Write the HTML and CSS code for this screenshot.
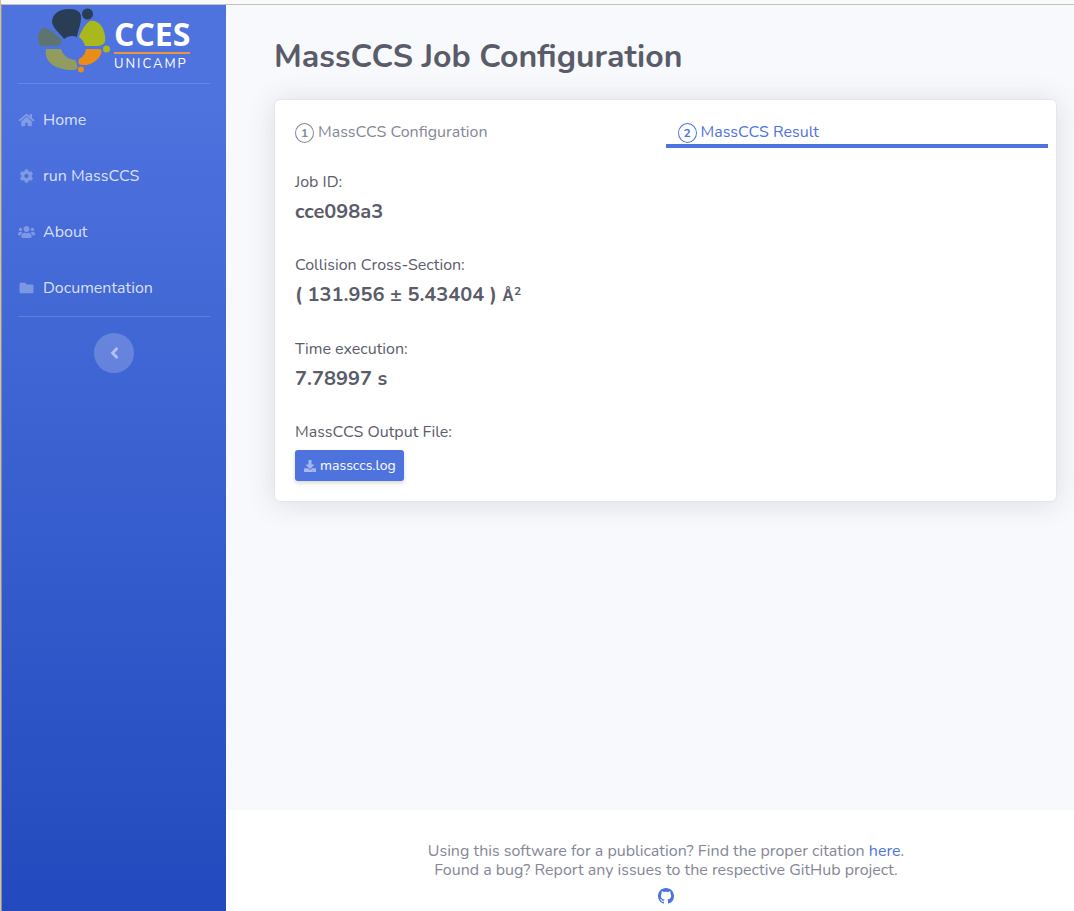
FILE: index.html
```html
<!DOCTYPE html>
<html lang="en">
<head>
<meta charset="utf-8">
<meta name="viewport" content="width=device-width, initial-scale=1">
<title>MassCCS Job Configuration</title>
<link rel="stylesheet" href="styles.css">
</head>
<body>
<div class="wrapper">
  <aside class="sidebar">
    <a class="brand" href="#" aria-label="CCES Unicamp">
      <svg class="brand-mark" viewBox="0 0 74 66" aria-hidden="true">
        <path fill="#293d54" d="M27 31C23 25 15 20 15 13C16 5 23 1 32 1C40 1 44 4 44 9C44 17 41 22 40 29C35 27 31 28 27 31Z"/>
        <circle fill="#293d54" cx="50.500" cy="6" r="5.500"/>
        <path fill="#a9b81d" d="M42 29C44 24 48 16 53 13C60 11 67 18 68 28C69 35 67 37 61 38H48C47 34 45 31 42 29Z"/>
        <circle fill="#a9b81d" cx="69.500" cy="41" r="3.500"/>
        <path fill="#5d7470" d="M25 32C19 27 12 19 6 20C1 23 0 31 2 35C3 39 7 39 11 38L24 37C23 35 24 33 25 32Z"/>
        <path fill="#939c5f" d="M9 41L24 41C26 47 30 51 38 52C40 55 41 59 40 61C36 63 28 62 22 60C13 57 7 50 9 41Z"/>
        <path fill="#e98c18" d="M49 41H61C65 41 65 43 64 46C61 53 53 58 45 57C41 57 41 54 42 51C46 49 48 46 49 41Z"/>
        <circle fill="#e98c18" cx="44" cy="61.500" r="3"/>
      </svg>
      <span class="brand-words">
        <span class="brand-name">CCES</span>
        <span class="brand-place">UNICAMP</span>
      </span>
    </a>
    <hr class="divider">
    <nav class="nav">
      <a class="nav-link" href="#">
        <svg class="nav-icon" viewBox="0 0 576 512" aria-hidden="true"><path d="M280.370 148.260L96 300.110V464a16 16 0 0 0 16 16l112.060-.29a16 16 0 0 0 15.920-16V368a16 16 0 0 1 16-16h64a16 16 0 0 1 16 16v95.640a16 16 0 0 0 16 16.050L464 480a16 16 0 0 0 16-16V300L295.670 148.260a12.190 12.190 0 0 0-15.300 0zM571.600 251.470L488 182.560V44.050a12 12 0 0 0-12-12h-56a12 12 0 0 0-12 12v72.610L318.470 43a48 48 0 0 0-61 0L4.340 251.470a12 12 0 0 0-1.600 16.900l25.500 31A12 12 0 0 0 45.150 301l235.220-193.740a12.190 12.190 0 0 1 15.300 0L530.900 301a12 12 0 0 0 16.900-1.600l25.500-31a12 12 0 0 0-1.700-16.930z"/></svg>
        <span>Home</span>
      </a>
      <a class="nav-link" href="#">
        <svg class="nav-icon" viewBox="0 0 512 512" aria-hidden="true"><path d="M487.400 315.700l-42.600-24.600c4.300-23.200 4.300-47 0-70.200l42.600-24.600c4.900-2.800 7.100-8.600 5.500-14-11.100-35.600-30-67.800-54.700-94.600-3.800-4.100-10-5.100-14.800-2.300L380.800 110c-17.900-15.400-38.500-27.300-60.800-35.100V25.800c0-5.600-3.900-10.500-9.400-11.700-36.700-8.200-74.300-7.800-109.200 0-5.500 1.200-9.400 6.100-9.400 11.700V75c-22.200 7.900-42.800 19.800-60.800 35.100L88.700 85.500c-4.900-2.800-11-1.900-14.800 2.300-24.700 26.700-43.600 58.900-54.700 94.600-1.700 5.400.6 11.200 5.500 14L67.300 221c-4.300 23.200-4.300 47 0 70.200l-42.600 24.600c-4.900 2.800-7.100 8.600-5.500 14 11.100 35.600 30 67.800 54.700 94.600 3.800 4.100 10 5.100 14.800 2.300l42.600-24.600c17.900 15.400 38.500 27.300 60.800 35.100v49.200c0 5.600 3.900 10.500 9.400 11.700 36.700 8.200 74.300 7.800 109.200 0 5.500-1.200 9.400-6.100 9.400-11.700v-49.200c22.200-7.900 42.800-19.800 60.800-35.100l42.600 24.600c4.900 2.800 11 1.900 14.800-2.300 24.700-26.700 43.600-58.900 54.700-94.600 1.500-5.500-.7-11.300-5.600-14.100zM256 336c-44.100 0-80-35.900-80-80s35.900-80 80-80 80 35.900 80 80-35.900 80-80 80z"/></svg>
        <span>run MassCCS</span>
      </a>
      <a class="nav-link" href="#">
        <svg class="nav-icon" viewBox="0 0 640 512" aria-hidden="true"><path d="M96 224c35.300 0 64-28.700 64-64s-28.700-64-64-64-64 28.700-64 64 28.700 64 64 64zm448 0c35.300 0 64-28.700 64-64s-28.700-64-64-64-64 28.700-64 64 28.700 64 64 64zm32 32h-64c-17.600 0-33.500 7.100-45.100 18.600 40.300 22.100 68.900 62 75.100 109.400h66c17.700 0 32-14.300 32-32v-32c0-35.300-28.700-64-64-64zm-256 0c61.900 0 112-50.100 112-112S381.900 32 320 32 208 82.100 208 144s50.100 112 112 112zm76.800 32h-8.300c-20.800 10-43.900 16-68.500 16s-47.600-6-68.500-16h-8.300C179.600 288 128 339.600 128 403.200V432c0 26.500 21.500 48 48 48h288c26.500 0 48-21.500 48-48v-28.800c0-63.600-51.600-115.200-115.200-115.200zm-223.700-13.400C161.500 263.100 145.600 256 128 256H64c-35.300 0-64 28.700-64 64v32c0 17.700 14.300 32 32 32h65.900c6.300-47.400 34.900-87.300 75.200-109.400z"/></svg>
        <span>About</span>
      </a>
      <a class="nav-link" href="#">
        <svg class="nav-icon" viewBox="0 0 512 512" aria-hidden="true"><path d="M464 128H272l-64-64H48C21.490 64 0 85.490 0 112v288c0 26.510 21.490 48 48 48h416c26.510 0 48-21.490 48-48V176c0-26.510-21.490-48-48-48z"/></svg>
        <span>Documentation</span>
      </a>
    </nav>
    <hr class="divider">
    <button class="toggle" type="button" aria-label="Collapse sidebar">
      <svg class="toggle-icon" viewBox="0 0 256 512" aria-hidden="true"><path d="M31.700 239l136-136c9.400-9.400 24.600-9.400 33.900 0l22.600 22.600c9.400 9.400 9.400 24.600 0 33.900L127.900 256l96.400 96.400c9.400 9.400 9.400 24.600 0 33.900L201.700 409c-9.400 9.400-24.600 9.400-33.900 0l-136-136c-9.500-9.400-9.500-24.600-.1-34z"/></svg>
    </button>
  </aside>

  <div class="content">
    <main class="main">
      <h1 class="title">MassCCS Job Configuration</h1>
      <section class="card">
        <nav class="tabs" aria-label="Job steps">
          <a class="tab" href="#"><span class="step">1</span>MassCCS Configuration</a>
          <a class="tab tab-active" href="#" aria-current="step"><span class="step">2</span>MassCCS Result</a>
        </nav>
        <dl class="results">
          <div class="result">
            <dt>Job ID:</dt>
            <dd>cce098a3</dd>
          </div>
          <div class="result">
            <dt>Collision Cross-Section:</dt>
            <dd>( 131.956 ± 5.43404 ) <span class="unit">Å<sup>2</sup></span></dd>
          </div>
          <div class="result">
            <dt>Time execution:</dt>
            <dd>7.78997 s</dd>
          </div>
          <div class="result">
            <dt>MassCCS Output File:</dt>
            <dd>
              <button class="download" type="button">
                <svg class="download-icon" viewBox="0 0 512 512" aria-hidden="true"><path d="M216 0h80c13.300 0 24 10.700 24 24v168h87.700c17.800 0 26.700 21.500 14.100 34.100L269.700 378.300c-7.500 7.500-19.800 7.500-27.300 0L90.100 226.100c-12.600-12.600-3.700-34.100 14.100-34.100H192V24c0-13.300 10.700-24 24-24zm296 376v112c0 13.300-10.700 24-24 24H24c-13.300 0-24-10.700-24-24V376c0-13.300 10.700-24 24-24h146.700l49 49c20.100 20.100 52.500 20.100 72.600 0l49-49H488c13.300 0 24 10.700 24 24zm-124 88c0-11-9-20-20-20s-20 9-20 20 9 20 20 20 20-9 20-20zm64 0c0-11-9-20-20-20s-20 9-20 20 9 20 20 20 20-9 20-20z"/></svg>
                massccs.log
              </button>
            </dd>
          </div>
        </dl>
      </section>
    </main>
    <footer class="footer">
      <p>Using this software for a publication? Find the proper citation <a href="#">here</a>.<br>
      Found a bug? Report any issues to the respective GitHub project.</p>
      <a class="github" href="#" aria-label="GitHub">
        <svg class="github-icon" viewBox="0 0 16 16" aria-hidden="true"><path d="M8 0C3.580 0 0 3.580 0 8c0 3.540 2.290 6.530 5.470 7.590.4.070.55-.17.55-.38 0-.19-.01-.82-.01-1.490-2.010.37-2.530-.49-2.690-.94-.09-.23-.48-.94-.82-1.130-.28-.15-.68-.52-.01-.53.63-.01 1.080.58 1.230.82.72 1.210 1.870.87 2.330.66.070-.52.28-.87.51-1.070-1.780-.2-3.640-.89-3.640-3.950 0-.87.31-1.590.82-2.150-.08-.2-.36-1.020.08-2.120 0 0 .67-.21 2.200.82.64-.18 1.320-.27 2-.27s1.360.09 2 .27c1.530-1.040 2.200-.82 2.200-.82.44 1.100.16 1.920.08 2.120.51.56.82 1.270.82 2.150 0 3.070-1.870 3.750-3.650 3.950.29.25.54.73.54 1.480 0 1.070-.01 1.930-.01 2.200 0 .21.15.46.55.38A8.010 8.010 0 0 0 16 8c0-4.420-3.580-8-8-8z"/></svg>
      </a>
    </footer>
  </div>
</div>
</body>
</html>
```

FILE: styles.css
```css
*,
*::before,
*::after {
  box-sizing: border-box;
}

body {
  margin: 0;
  padding-top: 4px;
  min-height: 100vh;
  display: flex;
  font-family: Nunito, Lato, "Open Sans", sans-serif;
  font-size: 16px;
  line-height: 24px;
  color: #5a5c69;
  background: #fafafa;
  border-left: 1px solid #c4c2bd;
}

a {
  color: #4e73df;
  text-decoration: none;
}

.wrapper {
  flex: 1;
  display: flex;
  border-top: 1px solid #c0c0c0;
  border-left: 1px solid #8f8f8f;
}

/* Sidebar */
.sidebar {
  flex: none;
  width: 224px;
  display: flex;
  flex-direction: column;
  background: linear-gradient(180deg, #4e73df 10%, #224abe 100%);
}

.brand {
  display: flex;
  gap: 3px;
  padding: 3px 34px 0 35px;
  height: 78px;
  color: #fff;
}

.brand-mark {
  flex: none;
  width: 74px;
  height: 66px;
}

.brand-words {
  flex: none;
  padding-top: 11px;
}

.brand-name {
  display: block;
  padding-bottom: 3px;
  border-bottom: 2px solid #e9973e;
  font-family: "Open Sans", "Noto Sans", sans-serif;
  font-size: 32px;
  font-weight: 700;
  line-height: 30px;
}

.brand-place {
  display: block;
  padding-top: 2px;
  font-size: 13px;
  line-height: 16px;
  letter-spacing: 2px;
}

.divider {
  width: auto;
  margin: 0 16px;
  border: 0;
  border-top: 1px solid rgba(255, 255, 255, 0.15);
}

.nav {
  padding: 8px 0 0;
}

.nav-link {
  display: flex;
  align-items: center;
  gap: 8px;
  padding: 16px;
  color: rgba(255, 255, 255, 0.8);
}

.nav-icon {
  width: 17px;
  height: 14px;
  fill: rgba(255, 255, 255, 0.3);
}

.toggle {
  display: flex;
  align-items: center;
  justify-content: center;
  align-self: center;
  width: 40px;
  height: 40px;
  margin-top: 16px;
  padding: 0;
  border: 0;
  border-radius: 50%;
  background: rgba(255, 255, 255, 0.2);
}

.toggle-icon {
  width: 9px;
  height: 18px;
  fill: rgba(255, 255, 255, 0.5);
}

/* Page */
.content {
  flex: 1;
  min-width: 0;
  display: flex;
  flex-direction: column;
  background: #f8f9fc;
}

.main {
  flex: 1;
  padding: 32px 17px 32px 48px;
}

.title {
  margin: 0 0 22px;
  font-size: 32px;
  font-weight: 700;
  line-height: 40px;
}

.card {
  padding: 20px;
  border: 1px solid #e3e6f0;
  border-radius: 6px;
  background: #fff;
  box-shadow: 0 2px 28px rgba(58, 59, 69, 0.15);
}

.tabs {
  display: flex;
  margin: 0 -12px 22px;
}

.tab {
  flex: 1;
  display: flex;
  align-items: center;
  gap: 4px;
  padding-left: 12px;
  border-bottom: 4px solid transparent;
  color: #858796;
}

.tab-active {
  border-bottom-color: #4e73df;
  color: #4e73df;
}

.step {
  width: 19px;
  height: 20px;
  margin-top: 2px;
  border: 1px solid currentColor;
  border-radius: 50%;
  font-size: 12px;
  font-weight: 700;
  line-height: 18px;
  text-align: center;
}

.results {
  display: grid;
  gap: 29px;
  margin: 0;
}

.result {
  display: grid;
  gap: 6px;
}

.result dd {
  margin: 0;
  font-size: 20px;
  font-weight: 700;
}

.unit {
  font-family: "Liberation Sans", sans-serif;
  font-size: 16px;
}

.unit sup {
  font-family: Nunito, Lato, sans-serif;
  font-size: 12px;
  line-height: 0;
}

.download {
  display: flex;
  align-items: center;
  gap: 4px;
  padding: 5px 8px 5px 9px;
  border: 0;
  border-radius: 3px;
  background: #4e73df;
  box-shadow: 0 2px 4px rgba(58, 59, 69, 0.2);
  color: #fff;
  font-family: inherit;
  font-size: 14px;
  line-height: 21px;
}

.download-icon {
  width: 12px;
  height: 12px;
  fill: rgba(255, 255, 255, 0.5);
}

/* Footer */
.footer {
  padding: 32px 16px 7px 48px;
  background: #fff;
  color: #858796;
  text-align: center;
  line-height: 19px;
}

.footer p {
  margin: 0;
}

.github {
  display: flex;
  justify-content: center;
  margin-top: 8px;
}

.github-icon {
  width: 16px;
  height: 16px;
  fill: #4e73df;
}
```
